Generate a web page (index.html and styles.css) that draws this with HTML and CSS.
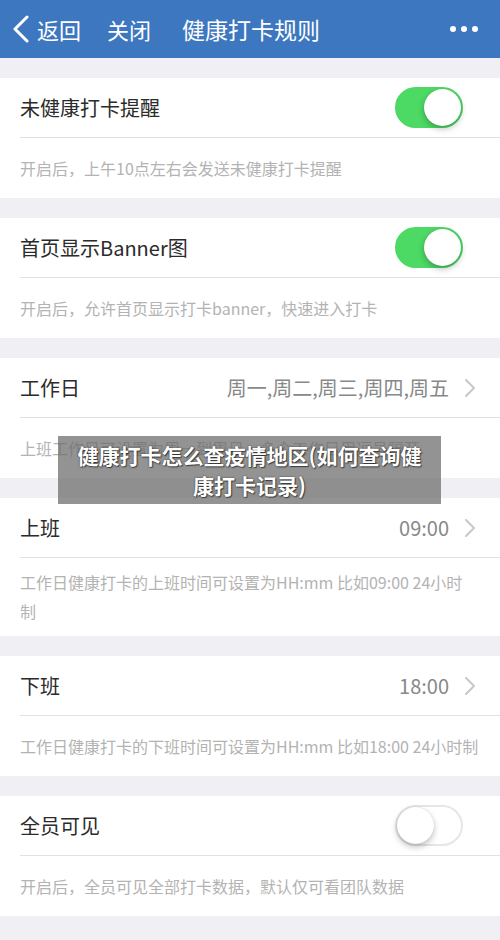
FILE: index.html
```html
<!DOCTYPE html>
<html lang="zh-CN">

<head>
    <meta charset="UTF-8">
    <meta name="viewport" content="width=device-width, initial-scale=1.0">
    <title>健康打卡规则</title>
    <link rel="stylesheet" href="styles.css">
</head>

<body>

    <header class="nav">
        <a class="nav-back" href="#">
            <svg width="18" height="28" viewBox="0 0 18 28">
                <path d="M15 2 L3 14 L15 26" fill="none" stroke="#fff" stroke-width="3" stroke-linecap="round" stroke-linejoin="round" />
            </svg>
            返回
        </a>
        <a class="nav-close" href="#">关闭</a>
        <span class="nav-title">健康打卡规则</span>
        <span class="nav-more"><i></i><i></i><i></i></span>
    </header>

    <main class="settings">
        <section class="group">
            <div class="row">
                <span class="row-label">未健康打卡提醒</span>
                <span class="switch on"></span>
            </div>
            <p class="hint">开启后，上午10点左右会发送未健康打卡提醒</p>
        </section>

        <section class="group">
            <div class="row">
                <span class="row-label">首页显示Banner图</span>
                <span class="switch on"></span>
            </div>
            <p class="hint">开启后，允许首页显示打卡banner，快速进入打卡</p>
        </section>

        <section class="group">
            <div class="row">
                <span class="row-label">工作日</span>
                <span class="row-value">周一,周二,周三,周四,周五</span>
                <svg class="chevron" width="14" height="22" viewBox="0 0 14 22">
                    <path d="M3 3 L11 11 L3 19" fill="none" stroke="#c7c7cc" stroke-width="2" stroke-linecap="round" stroke-linejoin="round" />
                </svg>
            </div>
            <p class="hint">上班工作日可设置为周一到周日，多个工作日用逗号隔开</p>
        </section>

        <section class="group">
            <div class="row">
                <span class="row-label">上班</span>
                <span class="row-value">09:00</span>
                <svg class="chevron" width="14" height="22" viewBox="0 0 14 22">
                    <path d="M3 3 L11 11 L3 19" fill="none" stroke="#c7c7cc" stroke-width="2" stroke-linecap="round" stroke-linejoin="round" />
                </svg>
            </div>
            <p class="hint hint-narrow">工作日健康打卡的上班时间可设置为HH:mm 比如09:00 24小时制</p>
        </section>

        <section class="group">
            <div class="row">
                <span class="row-label">下班</span>
                <span class="row-value">18:00</span>
                <svg class="chevron" width="14" height="22" viewBox="0 0 14 22">
                    <path d="M3 3 L11 11 L3 19" fill="none" stroke="#c7c7cc" stroke-width="2" stroke-linecap="round" stroke-linejoin="round" />
                </svg>
            </div>
            <p class="hint">工作日健康打卡的下班时间可设置为HH:mm 比如18:00 24小时制</p>
        </section>

        <section class="group">
            <div class="row">
                <span class="row-label">全员可见</span>
                <span class="switch"></span>
            </div>
            <p class="hint">开启后，全员可见全部打卡数据，默认仅可看团队数据</p>
        </section>
    </main>

    <!-- article caption laid over the page -->
    <div class="caption">健康打卡怎么查疫情地区(如何查询健康打卡记录)</div>

</body>

</html>
```

FILE: styles.css
```css
* {
    box-sizing: border-box;
}

body {
    margin: 0;
    background-color: #efeff4;
    font-family: "Noto Sans CJK SC", "Noto Sans", sans-serif;
    color: #2b2b2b;
    position: relative;
    min-height: 940px;
}

/* top navigation bar */
.nav {
    height: 58px;
    background-color: #3d77c0;
    display: flex;
    align-items: center;
    padding: 0 22px 0 12px;
    color: #fff;
    font-size: 22px;
}

.nav a {
    color: #fff;
    text-decoration: none;
}

.nav-back {
    display: flex;
    align-items: center;
    gap: 7px;
}

.nav-close {
    margin-left: 26px;
}

.nav-title {
    margin-left: 31px;
    font-size: 23px;
}

.nav-more {
    margin-left: auto;
    display: flex;
    gap: 5px;
}

.nav-more i {
    width: 6px;
    height: 6px;
    border-radius: 50%;
    background-color: #fff;
}

/* setting groups */
.settings {
    padding-top: 20px;
    padding-bottom: 20px;
    display: flex;
    flex-direction: column;
    gap: 20px;
}

.group {
    background-color: #fff;
}

.row {
    height: 60px;
    margin-left: 20px;
    padding-right: 23px;
    border-bottom: 1px solid #e2e2e6;
    display: flex;
    align-items: center;
    font-size: 20px;
}

.row-label {
    flex: 1;
}

.row-value {
    color: #888;
}

.chevron {
    margin-left: 14px;
}

.hint {
    margin: 0;
    padding: 10px 20px;
    min-height: 60px;
    display: flex;
    align-items: center;
    font-size: 16px;
    line-height: 29px;
    color: #b3b3b3;
}

.hint-narrow {
    padding-right: 34px;
}

/* iOS style switch */
.switch {
    width: 68px;
    height: 41px;
    margin-right: 14px;
    border-radius: 21px;
    background-color: #fff;
    border: 2px solid #e6e6e6;
    position: relative;
}

.switch::after {
    content: "";
    position: absolute;
    top: 0;
    left: 0;
    width: 37px;
    height: 37px;
    border-radius: 50%;
    background-color: #fff;
    box-shadow: 0 3px 6px rgba(0, 0, 0, 0.25), 0 0 1px rgba(0, 0, 0, 0.2);
}

.switch.on {
    background-color: #4cd964;
    border-color: #4cd964;
}

.switch.on::after {
    left: 27px;
}

/* caption box */
.caption {
    position: absolute;
    left: 58px;
    top: 436px;
    width: 383px;
    padding: 4px 14px;
    background-color: rgba(105, 105, 105, 0.72);
    color: #fff;
    font-size: 21px;
    font-weight: bold;
    line-height: 30px;
    text-align: center;
    text-shadow: 0 0 2px rgba(0, 0, 0, 0.6), 1px 1px 1px rgba(0, 0, 0, 0.5);
}
```
